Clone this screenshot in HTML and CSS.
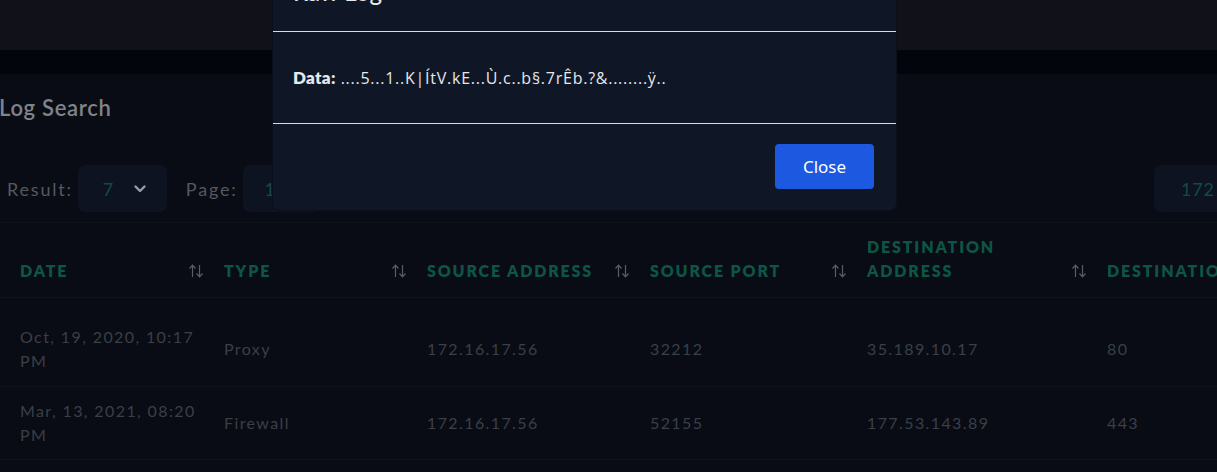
FILE: index.html
```html
<!DOCTYPE html>
<html lang="en">
<head>
<meta charset="utf-8">
<title>Log Search</title>
<link rel="stylesheet" href="styles.css">
</head>
<body>
<div class="page">
  <header class="navbar"></header>
  <div class="strip"></div>
  <main class="content">
    <h2 class="title">Log Search</h2>
    <div class="controls">
      <label class="ctl-label">Result:</label>
      <div class="select">
        <span class="val">7</span>
        <svg class="chev" width="16" height="16" viewBox="0 0 16 16"><path d="M3.5 5.5 L8 10 L12.5 5.5" fill="none" stroke="currentColor" stroke-width="2.4" stroke-linecap="round" stroke-linejoin="round"/></svg>
      </div>
      <label class="ctl-label page-label">Page:</label>
      <div class="input page-input"><span class="val">1</span></div>
      <div class="spacer"></div>
      <div class="input ip-input"><span class="val">172</span></div>
    </div>
    <table class="logs">
      <thead>
        <tr>
          <th class="c-date"><div class="th"><span>Date</span><svg class="sort" width="16" height="14" viewBox="0 0 16 14"><path d="M4.5 13V1.5M1.5 4.5L4.5 1.2L7.5 4.5M11.5 1V12.5M8.5 9.5L11.5 12.8L14.5 9.5" fill="none" stroke="currentColor" stroke-width="1.2"/></svg></div></th>
          <th class="c-type"><div class="th"><span>Type</span><svg class="sort" width="16" height="14" viewBox="0 0 16 14"><path d="M4.5 13V1.5M1.5 4.5L4.5 1.2L7.5 4.5M11.5 1V12.5M8.5 9.5L11.5 12.8L14.5 9.5" fill="none" stroke="currentColor" stroke-width="1.2"/></svg></div></th>
          <th class="c-saddr"><div class="th"><span>Source Address</span><svg class="sort" width="16" height="14" viewBox="0 0 16 14"><path d="M4.5 13V1.5M1.5 4.5L4.5 1.2L7.5 4.5M11.5 1V12.5M8.5 9.5L11.5 12.8L14.5 9.5" fill="none" stroke="currentColor" stroke-width="1.2"/></svg></div></th>
          <th class="c-sport"><div class="th"><span>Source Port</span><svg class="sort" width="16" height="14" viewBox="0 0 16 14"><path d="M4.5 13V1.5M1.5 4.5L4.5 1.2L7.5 4.5M11.5 1V12.5M8.5 9.5L11.5 12.8L14.5 9.5" fill="none" stroke="currentColor" stroke-width="1.2"/></svg></div></th>
          <th class="c-daddr"><div class="th"><span>Destination<br>Address</span><svg class="sort" width="16" height="14" viewBox="0 0 16 14"><path d="M4.5 13V1.5M1.5 4.5L4.5 1.2L7.5 4.5M11.5 1V12.5M8.5 9.5L11.5 12.8L14.5 9.5" fill="none" stroke="currentColor" stroke-width="1.2"/></svg></div></th>
          <th class="c-dport"><div class="th"><span>Destination Port</span></div></th>
        </tr>
      </thead>
      <tbody>
        <tr class="first">
          <td>Oct, 19, 2020, 10:17<br>PM</td>
          <td>Proxy</td>
          <td>172.16.17.56</td>
          <td>32212</td>
          <td>35.189.10.17</td>
          <td>80</td>
        </tr>
        <tr>
          <td>Mar, 13, 2021, 08:20<br>PM</td>
          <td>Firewall</td>
          <td>172.16.17.56</td>
          <td>52155</td>
          <td>177.53.143.89</td>
          <td>443</td>
        </tr>
      </tbody>
    </table>
  </main>
</div>

<div class="modal" role="dialog">
  <div class="modal-header"><h3 class="modal-title">Raw Log</h3></div>
  <div class="modal-body"><b>Data:</b> ....5...1..K|ÍtV.kE...Ù.c..b§.7rÊb.?&amp;........ÿ..</div>
  <div class="modal-footer"><button class="btn-close">Close</button></div>
</div>
</body>
</html>
```

FILE: styles.css
```css
* { box-sizing: border-box; }
html, body { margin: 0; padding: 0; }
body {
  background: #090c14;
  font-family: "Lato", "Noto Sans", sans-serif;
  width: 1217px;
  height: 472px;
  overflow: hidden;
  position: relative;
}
.page { width: 1400px; }
.navbar { height: 50px; background: #11111a; }
.strip { height: 24px; background: #03050c; }
.content { background: #090c14; padding-top: 20px; }
.title {
  margin: 0 0 0 -1px;
  font-size: 22px;
  line-height: 28px;
  font-weight: 600;
  letter-spacing: 0.7px;
  color: #808389;
}
.controls {
  display: flex;
  align-items: center;
  margin-top: 43px;
  padding-left: 7px;
  height: 47px;
  width: 1217px;
}
.ctl-label { font-size: 18px; color: #55585e; letter-spacing: 1.8px; }
.select, .input {
  height: 47px;
  background: #0d1320;
  border-radius: 7px;
  display: flex;
  align-items: center;
  font-size: 18px;
  color: #134a48;
}
.select { width: 89px; margin-left: 5px; padding-left: 25px; gap: 19px; }
.chev { color: #9a9da3; }
.page-label { margin-left: 19px; }
.page-input { width: 77px; margin-left: 5px; padding-left: 22px; }
.spacer { flex: 1; }
.ip-input { width: 80px; margin-right: -17px; padding-left: 27px; border-radius: 7px 0 0 7px; letter-spacing: 0.8px; }

.logs {
  margin-top: 10px;
  border-collapse: collapse;
  table-layout: fixed;
  width: 1400px;
  border-top: 1px solid #0e121b;
}
.logs th {
  vertical-align: bottom;
  text-align: left;
  padding: 0 0 14px 20px;
  height: 75px;
  font-size: 16px;
  line-height: 24px;
  font-weight: 800;
  text-transform: uppercase;
  letter-spacing: 1.85px;
  color: #0d5546;
  border-bottom: 1px solid #0f131c;
}
.th { display: flex; align-items: flex-end; justify-content: space-between; white-space: nowrap; }
.sort { color: #5a5e66; margin-bottom: 5px; flex: none; }
.c-date { width: 204px; }
.c-type { width: 203px; }
.c-saddr { width: 223px; }
.c-sport { width: 217px; }
.c-daddr { width: 240px; }
.c-dport { width: 313px; }
.logs td {
  padding: 12px 20px;
  font-size: 16px;
  line-height: 24px;
  letter-spacing: 1.4px;
  color: #3b3f47;
  border-bottom: 1px solid #0f131c;
  vertical-align: middle;
  white-space: nowrap;
}
.logs tr.first td { padding-top: 27px; padding-bottom: 13px; }

.modal {
  position: absolute;
  left: 273px;
  top: -40px;
  width: 623px;
  background: #0f1726;
  border-radius: 0 0 6px 6px;
  box-shadow: 0 0 0 1px #0b101b;
  color: #e6e8ec;
}
.modal-header { padding: 16px 20px 23px; border-bottom: 1px solid #d8dce3; }
.modal-title { margin: 0; font-size: 24px; line-height: 32px; font-weight: 500; color: #e6e8ec; }
.modal-body {
  padding: 34px 20px 33px;
  font-family: "Open Sans", "Lato", sans-serif;
  font-size: 16px;
  line-height: 24px;
  letter-spacing: 0.75px;
  border-bottom: 1px solid #d8dce3;
}
.modal-body b { font-family: "Lato", sans-serif; font-weight: 800; font-size: 17px; letter-spacing: 0.3px; }
.modal-footer { display: flex; justify-content: flex-end; padding: 20px 22px 21px; }
.btn-close {
  height: 45px;
  width: 99px;
  border: 0;
  border-radius: 4px;
  background: #1c58e0;
  color: #ffffff;
  font-family: "Noto Sans", sans-serif;
  font-size: 17px;
}
```
